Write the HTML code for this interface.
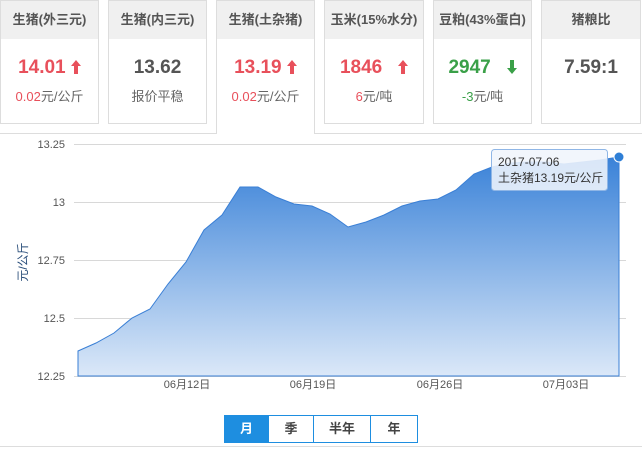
<!DOCTYPE html>
<html><head><meta charset="utf-8"><style>
body{margin:0;width:642px;height:453px;background:#fff;font-family:"Liberation Sans","Noto Sans CJK SC",sans-serif;position:relative;overflow:hidden}
.c{position:absolute;top:0;height:124px;border:1px solid #ddd;background:#fff;box-sizing:border-box}
.c .h{height:38px;background:#f0f0f0;text-align:center;line-height:38px;font-size:13px;font-weight:bold;color:#555}
.c .v{text-align:center;font-size:19px;font-weight:bold;margin-top:17px;height:24px;line-height:24px}
.c .s{text-align:center;font-size:13px;color:#666;margin-top:6px}
.a{display:inline-block;vertical-align:-1px}
.r{color:#e8505b}.g{color:#3aa048}.d{color:#555}
.sel{height:134px;border-bottom:none;z-index:2}
.panel{position:absolute;left:0;top:133px;width:642px;height:314px;border-top:1px solid #ddd;border-bottom:1px solid #ddd;box-sizing:border-box}
.btn{position:absolute;top:415px;height:28px;border:1px solid #1e8ee0;box-sizing:border-box;text-align:center;line-height:26px;font-size:13px;font-weight:bold;color:#444}
</style></head><body>
<div class="c" style="left:0;width:99px"><div class="h">生猪(外三元)</div><div class="v r">14.01 <svg class="a" width="10" height="14"><path d="M5,0 L10,6 L7,6 L7,14 L3,14 L3,6 L0,6 Z" fill="#e8505b"/></svg></div><div class="s"><span class="r">0.02</span>元/公斤</div></div>
<div class="c" style="left:108px;width:99px"><div class="h">生猪(内三元)</div><div class="v d">13.62</div><div class="s">报价平稳</div></div>
<div class="c sel" style="left:216px;width:99px"><div class="h">生猪(土杂猪)</div><div class="v r">13.19 <svg class="a" width="10" height="14"><path d="M5,0 L10,6 L7,6 L7,14 L3,14 L3,6 L0,6 Z" fill="#e8505b"/></svg></div><div class="s"><span class="r">0.02</span>元/公斤</div></div>
<div class="c" style="left:324px;width:100px"><div class="h">玉米(15%水分)</div><div class="v r">1846 &nbsp;&nbsp;<svg class="a" width="10" height="14"><path d="M5,0 L10,6 L7,6 L7,14 L3,14 L3,6 L0,6 Z" fill="#e8505b"/></svg></div><div class="s"><span class="r">6</span>元/吨</div></div>
<div class="c" style="left:433px;width:99px"><div class="h">豆粕(43%蛋白)</div><div class="v g">2947 &nbsp;&nbsp;<svg class="a" width="10" height="14"><path d="M5,14 L10,8 L7,8 L7,0 L3,0 L3,8 L0,8 Z" fill="#3aa048"/></svg></div><div class="s"><span class="g">-3</span>元/吨</div></div>
<div class="c" style="left:541px;width:100px"><div class="h">猪粮比</div><div class="v d">7.59:1</div></div>
<div class="panel"></div>
<svg style="position:absolute;left:0;top:0" width="642" height="453">
<defs><linearGradient id="gr" x1="0" y1="0" x2="0" y2="1"><stop offset="0" stop-color="#3a82d8"/><stop offset="1" stop-color="#dbe8f8"/></linearGradient></defs>
<g stroke="#d8d8d8" stroke-width="1">
<line x1="74" y1="144.5" x2="626" y2="144.5"/><line x1="74" y1="202.5" x2="626" y2="202.5"/><line x1="74" y1="260.5" x2="626" y2="260.5"/><line x1="74" y1="318.5" x2="626" y2="318.5"/><line x1="74" y1="376.5" x2="626" y2="376.5"/>
</g>
<path d="M78,351 L96,343 114,333 132,318 150,309 168,284 186,262 204,230 222,215 240,187 258,187 276,197 294,204 312,206 330,214 348,227 366,222 384,215 402,206 420,201 438,199 456,190 474,174 492,167 510,163 528,162 546,162 564,164 582,162 600,160 619,157 L619,376 L78,376 Z" fill="url(#gr)" stroke="#3a7fd5" stroke-width="1"/>
<circle cx="619" cy="157" r="5" fill="#2f7fd6" stroke="#fff" stroke-width="1"/>
<g font-size="11" fill="#555" text-anchor="end" font-family="Liberation Sans,sans-serif">
<text x="65" y="148">13.25</text><text x="65" y="206">13</text><text x="65" y="264">12.75</text><text x="65" y="322">12.5</text><text x="65" y="380">12.25</text>
</g>
<g font-size="11" fill="#555" text-anchor="middle" font-family="Liberation Sans,Noto Sans CJK SC,sans-serif">
<text x="187" y="388">06月12日</text><text x="313" y="388">06月19日</text><text x="440" y="388">06月26日</text><text x="566" y="388">07月03日</text>
</g>
<text transform="translate(27,262) rotate(-90)" font-size="12" fill="#2a4e7a" text-anchor="middle" font-family="Liberation Sans,Noto Sans CJK SC,sans-serif">元/公斤</text>
<rect x="491.5" y="149.5" width="116" height="41" rx="3" fill="rgba(240,245,252,0.88)" stroke="#8fb6e6"/>
<text x="498" y="166" font-size="12" fill="#333" font-family="Liberation Sans,Noto Sans CJK SC,sans-serif">2017-07-06</text>
<text x="498" y="182" font-size="12" fill="#333" font-family="Liberation Sans,Noto Sans CJK SC,sans-serif">土杂猪13.19元/公斤</text>
</svg>
<div class="btn" style="left:224px;width:45px;background:#1e8ee0;color:#fff">月</div>
<div class="btn" style="left:268px;width:46px">季</div>
<div class="btn" style="left:313px;width:58px">半年</div>
<div class="btn" style="left:370px;width:48px">年</div>
</body></html>
